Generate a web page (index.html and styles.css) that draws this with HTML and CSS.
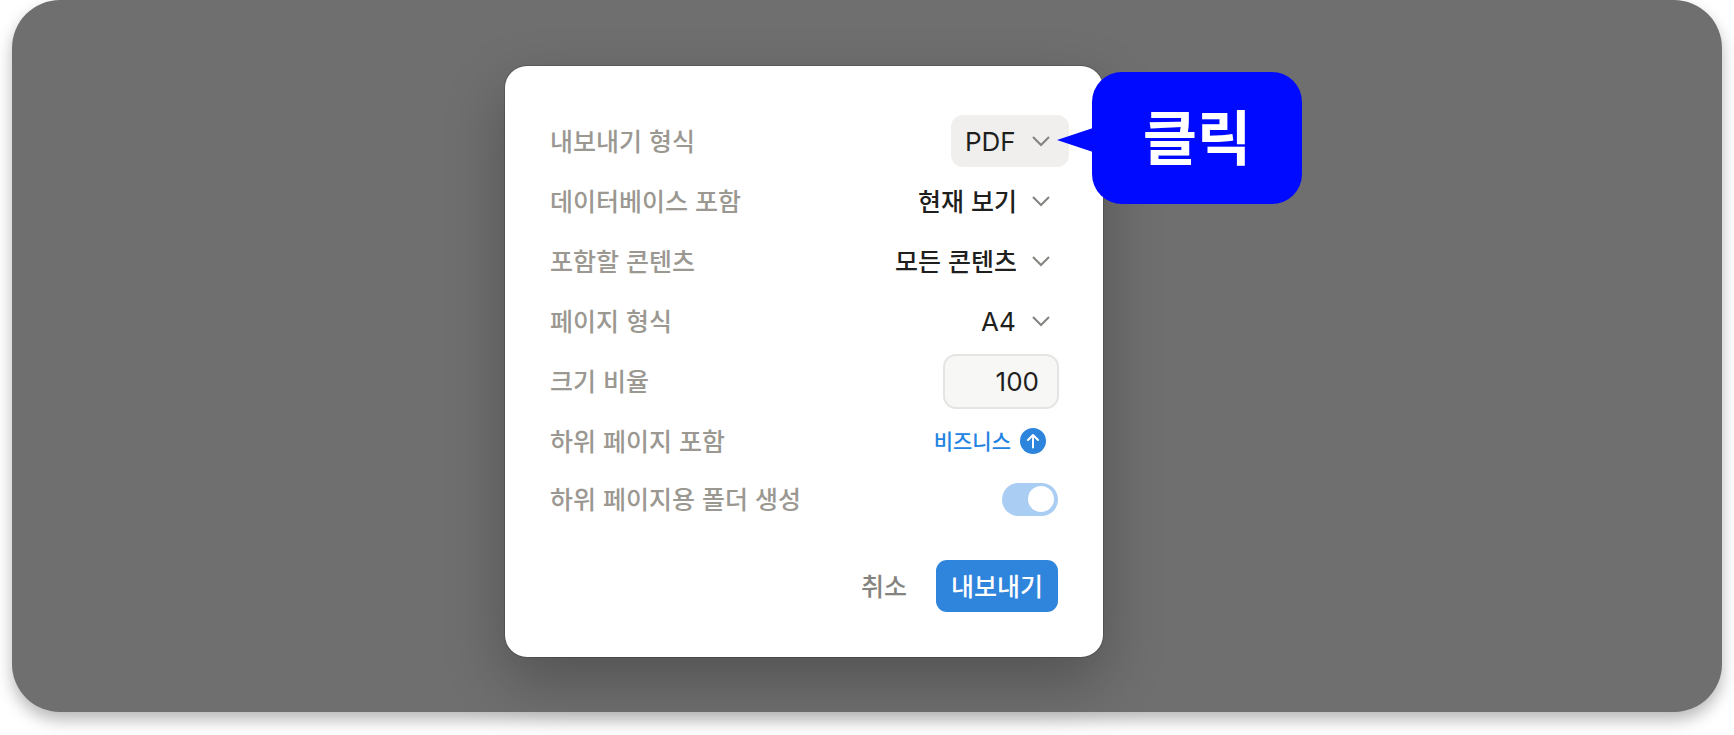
FILE: index.html
```html
<!DOCTYPE html>
<html lang="ko">
<head>
<meta charset="utf-8">
<meta name="viewport" content="width=device-width, initial-scale=1">
<title>내보내기</title>
<link rel="stylesheet" href="styles.css">
</head>
<body>
<main class="stage">
  <form class="dialog">
    <div class="rows">
      <div class="row">
        <label class="label" for="format">내보내기 형식</label>
        <div class="picker picker-active">
          <select class="select select-latin" id="format"><option>PDF</option></select>
          <svg class="chevron" viewBox="0 0 18 12" aria-hidden="true"><path d="M1 2 9 10 17 2"/></svg>
        </div>
      </div>
      <div class="row">
        <label class="label" for="database">데이터베이스 포함</label>
        <div class="picker">
          <select class="select" id="database"><option>현재 보기</option></select>
          <svg class="chevron" viewBox="0 0 18 12" aria-hidden="true"><path d="M1 2 9 10 17 2"/></svg>
        </div>
      </div>
      <div class="row">
        <label class="label" for="content">포함할 콘텐츠</label>
        <div class="picker">
          <select class="select" id="content"><option>모든 콘텐츠</option></select>
          <svg class="chevron" viewBox="0 0 18 12" aria-hidden="true"><path d="M1 2 9 10 17 2"/></svg>
        </div>
      </div>
      <div class="row">
        <label class="label" for="page">페이지 형식</label>
        <div class="picker">
          <select class="select select-latin" id="page"><option>A4</option></select>
          <svg class="chevron" viewBox="0 0 18 12" aria-hidden="true"><path d="M1 2 9 10 17 2"/></svg>
        </div>
      </div>
      <div class="row">
        <label class="label" for="scale">크기 비율</label>
        <input class="number" id="scale" type="text" inputmode="numeric" value="100">
      </div>
      <div class="row">
        <span class="label">하위 페이지 포함</span>
        <a class="upgrade" href="#"><span class="upgrade-text">비즈니스</span>
          <svg class="upgrade-icon" viewBox="0 0 26 26" aria-hidden="true"><circle cx="13" cy="13" r="13"/><path d="M13 19.500V7M8 12l5-5 5 5"/></svg>
        </a>
      </div>
      <div class="row">
        <label class="label" for="folders">하위 페이지용 폴더 생성</label>
        <input class="toggle" id="folders" type="checkbox" role="switch" checked>
      </div>
    </div>
    <div class="actions">
      <button class="button" type="button">취소</button>
      <button class="button button-primary" type="submit">내보내기</button>
    </div>
    <div class="callout">
      <svg class="callout-tail" viewBox="0 0 36 24" aria-hidden="true"><path d="M36 0 0 12l36 12z"/></svg>
      클릭
    </div>
  </form>
</main>
</body>
</html>
```
FILE: styles.css
```css
* {
  box-sizing: border-box;
}

body {
  margin: 0;
  background: #fff;
  font-family: "Noto Sans CJK KR", sans-serif;
  font-size: 25px;
  font-weight: 500;
  line-height: 36px;
}

.stage {
  display: flex;
  justify-content: center;
  margin: 0 12px 24px;
  padding: 66px 126px 55px 0;
  border-radius: 48px;
  background: #6f6f6f;
  box-shadow: 0 8px 16px rgba(0, 0, 0, 0.28);
}

.dialog {
  position: relative;
  width: 100%;
  max-width: 598px;
  padding: 45px;
  border-radius: 22px;
  background: #fff;
  box-shadow: 0 0 0 1px rgba(0, 0, 0, 0.16), 0 24px 60px rgba(0, 0, 0, 0.26);
}

.row {
  display: flex;
  align-items: center;
  justify-content: space-between;
  height: 60px;
}

.row:last-child {
  height: 56px;
}

.label {
  padding-bottom: 3px;
  color: #9b9892;
}

.picker {
  display: grid;
  align-items: center;
  margin-right: -11px;
  border-radius: 12px;
}

.picker-active {
  background: #f0efed;
}

.select {
  grid-area: 1 / 1;
  height: 52px;
  padding: 0 53px 3px 14px;
  border: 0;
  appearance: none;
  background: transparent;
  color: #1f1f1e;
  font: inherit;
}

.select-latin {
  padding-bottom: 0;
  font: 400 26px Inter, sans-serif;
}

.chevron {
  grid-area: 1 / 1;
  justify-self: end;
  width: 18px;
  margin-right: 19px;
  fill: none;
  stroke: #85837e;
  stroke-width: 2;
  pointer-events: none;
}

.number {
  width: 116px;
  height: 55px;
  margin-right: -1px;
  padding: 0 18px;
  border: 2px solid #e4e4e2;
  border-radius: 13px;
  background: #f7f7f5;
  color: #1f1f1e;
  font: 400 26px Inter, sans-serif;
  text-align: right;
}

.upgrade {
  display: flex;
  align-items: center;
  gap: 9px;
  margin-right: 12px;
  color: #2383e2;
  font-size: 21px;
  text-decoration: none;
}

.upgrade-text {
  padding-bottom: 2px;
}

.upgrade-icon {
  width: 26px;
  height: 26px;
  fill: #2c84dd;
}

.upgrade-icon path {
  fill: none;
  stroke: #fff;
  stroke-width: 2;
  stroke-linecap: round;
  stroke-linejoin: round;
}

.toggle {
  display: flex;
  align-items: center;
  justify-content: flex-end;
  width: 56px;
  height: 33px;
  margin: 0;
  padding: 0 4px;
  border-radius: 17px;
  appearance: none;
  background: #a9cdf3;
}

.toggle::before {
  content: "";
  width: 26px;
  height: 26px;
  border-radius: 50%;
  background: #fff;
}

.actions {
  display: flex;
  justify-content: flex-end;
  gap: 14px;
  margin-top: 33px;
}

.button {
  height: 52px;
  padding: 0 15px 3px;
  border: 0;
  border-radius: 11px;
  background: transparent;
  color: #85837e;
  font: inherit;
}

.button-primary {
  background: #2f84dc;
  color: #fff;
}

.callout {
  position: absolute;
  top: 6px;
  left: 587px;
  display: flex;
  align-items: center;
  justify-content: center;
  width: 210px;
  height: 132px;
  padding-bottom: 7px;
  border-radius: 30px;
  background: #000aff;
  color: #fff;
  font-size: 59px;
  font-weight: 700;
  line-height: 1;
}

.callout-tail {
  position: absolute;
  top: 56px;
  right: 209px;
  width: 36px;
  height: 24px;
  fill: #000aff;
}
```
